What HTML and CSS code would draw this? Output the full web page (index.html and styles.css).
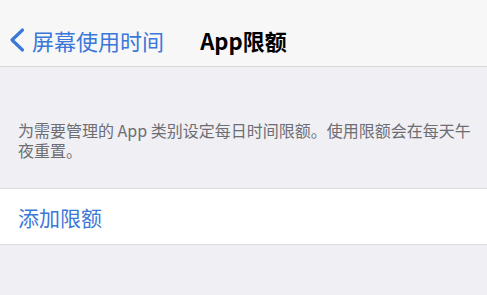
FILE: index.html
```html
<!DOCTYPE html>
<html lang="zh-CN">
<head>
  <meta charset="UTF-8" />
  <meta name="viewport" content="width=device-width, initial-scale=1.0"/>
  <title>App限额</title>
  <link rel="stylesheet" href="styles.css">
</head>
<body>

  <!-- Nav Bar -->
  <div class="nav-bar">
    <a class="back-btn">
      <svg class="chevron" width="18" height="26" viewBox="0 0 18 26">
        <polyline points="14.5,3 4,13 14.5,23" fill="none" stroke="currentColor" stroke-width="3.2" stroke-linecap="round" stroke-linejoin="round"/>
      </svg>
      <span>屏幕使用时间</span>
    </a>
    <h1 class="nav-title">App限额</h1>
    <div></div>
  </div>

  <!-- Content -->
  <div class="content">
    <p class="section-footer">为需要管理的 App 类别设定每日时间限额。使用限额会在每天午夜重置。</p>

    <div class="cell-group">
      <a class="cell-action">添加限额</a>
    </div>
  </div>

</body>
</html>
```

FILE: styles.css
```css
body {
  font-family: "Noto Sans CJK SC", "Noto Sans", sans-serif;
  background: #efeff4;
  margin: 0;
  padding: 0;
  height: 100vh;
  overflow: hidden;
}

.nav-bar {
  display: grid;
  grid-template-columns: 1fr auto 1fr;
  align-items: center;
  height: 44px;
  padding-top: 18px;
  padding-bottom: 4px;
  background: #f7f7f8;
  border-bottom: 1px solid #d8d8dc;
}

.back-btn {
  display: flex;
  align-items: center;
  color: #3b78d8;
  font-size: 22px;
  padding-left: 8px;
  cursor: pointer;
}

.chevron {
  margin-right: 6px;
}

.nav-title {
  margin: 0;
  font-size: 22px;
  font-weight: bold;
  color: #000;
}

.section-footer {
  margin: 0;
  padding: 53px 6px 28px 18px;
  font-size: 16px;
  line-height: 20px;
  color: #6d6d72;
}

.cell-group {
  background: #fff;
  border-top: 1px solid #dcdce0;
  border-bottom: 1px solid #dcdce0;
  height: 55px;
  display: flex;
  align-items: center;
  padding: 0 18px;
}

.cell-action {
  color: #3b78d8;
  font-size: 21px;
  cursor: pointer;
}
```
